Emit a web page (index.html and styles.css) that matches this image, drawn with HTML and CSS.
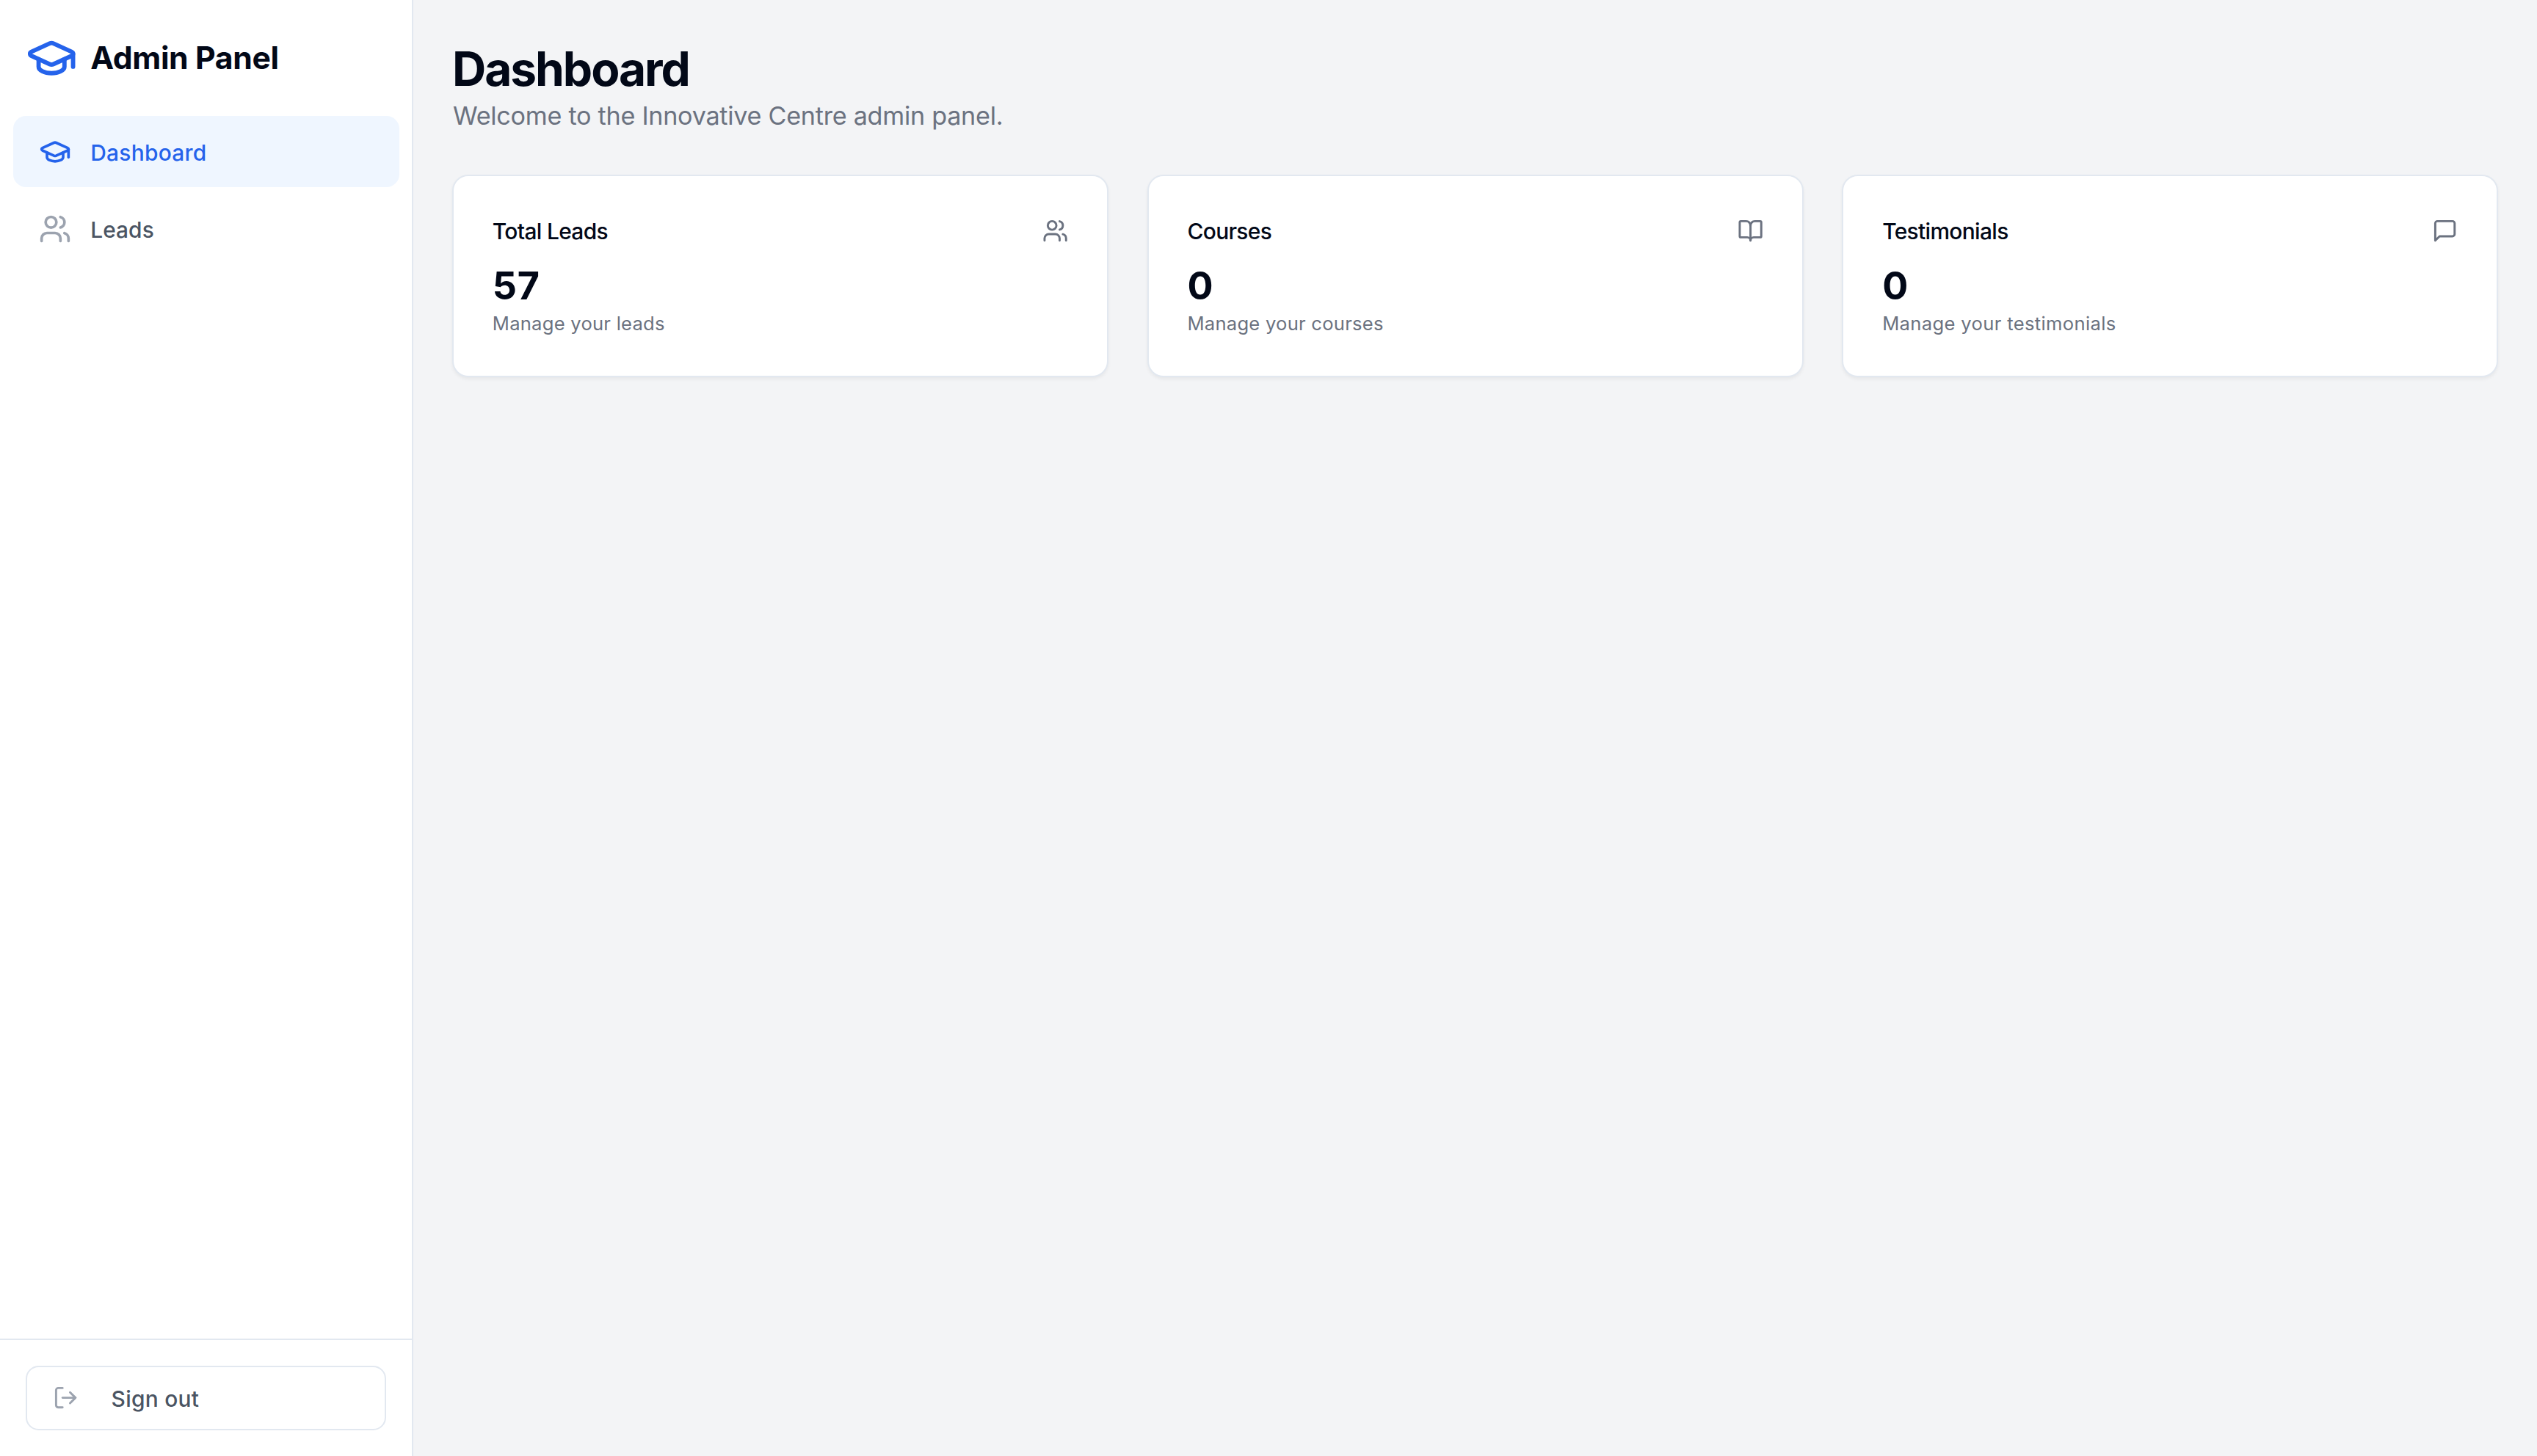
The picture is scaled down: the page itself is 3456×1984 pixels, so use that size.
FILE: index.html
```html
<!DOCTYPE html>
<html lang="en">
<head>
<meta charset="utf-8">
<title>Admin Panel</title>
<link rel="stylesheet" href="styles.css">
</head>
<body>
<svg class="sprite" aria-hidden="true">
  <symbol id="graduation-cap" viewBox="0 0 24 24">
    <path d="M21.42 10.922a1 1 0 0 0-.019-1.838L12.83 5.18a2 2 0 0 0-1.66 0L2.6 9.08a1 1 0 0 0 0 1.832l8.57 3.908a2 2 0 0 0 1.66 0z"/>
    <path d="M22 10v6"/>
    <path d="M6 12.5V16a6 3 0 0 0 12 0v-3.5"/>
  </symbol>
  <symbol id="users" viewBox="0 0 24 24">
    <path d="M16 21v-2a4 4 0 0 0-4-4H6a4 4 0 0 0-4 4v2"/>
    <circle cx="9" cy="7" r="4"/>
    <path d="M22 21v-2a4 4 0 0 0-3-3.87"/>
    <path d="M16 3.13a4 4 0 0 1 0 7.75"/>
  </symbol>
  <symbol id="book-open" viewBox="0 0 24 24">
    <path d="M12 7v14"/>
    <path d="M3 18a1 1 0 0 1-1-1V4a1 1 0 0 1 1-1h5a4 4 0 0 1 4 4 4 4 0 0 1 4-4h5a1 1 0 0 1 1 1v13a1 1 0 0 1-1 1h-6a3 3 0 0 0-3 3 3 3 0 0 0-3-3z"/>
  </symbol>
  <symbol id="message-square" viewBox="0 0 24 24">
    <path d="M21 15a2 2 0 0 1-2 2H7l-4 4V5a2 2 0 0 1 2-2h14a2 2 0 0 1 2 2z"/>
  </symbol>
  <symbol id="log-out" viewBox="0 0 24 24">
    <path d="M9 21H5a2 2 0 0 1-2-2V5a2 2 0 0 1 2-2h4"/>
    <path d="m16 17 5-5-5-5"/>
    <path d="M21 12H9"/>
  </symbol>
</svg>
<div class="layout">
  <aside class="sidebar">
    <div class="brand">
      <svg class="icon icon-lg"><use href="#graduation-cap"/></svg>
      <span class="brand-name">Admin Panel</span>
    </div>
    <nav class="nav">
      <a class="nav-item active">
        <svg class="icon icon-md"><use href="#graduation-cap"/></svg>
        <span class="label label-dashboard">Dashboard</span>
      </a>
      <a class="nav-item">
        <svg class="icon icon-md"><use href="#users"/></svg>
        <span class="label">Leads</span>
      </a>
    </nav>
    <div class="sidebar-footer">
      <button class="sign-out" type="button">
        <svg class="icon icon-sm"><use href="#log-out"/></svg>
        <span class="label label-sign-out">Sign out</span>
      </button>
    </div>
  </aside>
  <main class="main">
    <header class="page-header">
      <h1>Dashboard</h1>
      <p>Welcome to the Innovative Centre admin panel.</p>
    </header>
    <section class="cards">
      <article class="card">
        <div class="card-header">
          <h2>Total Leads</h2>
          <svg class="icon icon-sm"><use href="#users"/></svg>
        </div>
        <div class="count">57</div>
        <p class="hint">Manage your leads</p>
      </article>
      <article class="card">
        <div class="card-header">
          <h2>Courses</h2>
          <svg class="icon icon-sm"><use href="#book-open"/></svg>
        </div>
        <div class="count">0</div>
        <p class="hint">Manage your courses</p>
      </article>
      <article class="card">
        <div class="card-header">
          <h2>Testimonials</h2>
          <svg class="icon icon-sm"><use href="#message-square"/></svg>
        </div>
        <div class="count">0</div>
        <p class="hint hint-wide">Manage your testimonials</p>
      </article>
    </section>
  </main>
</div>
</body>
</html>
```
FILE: styles.css
```css
:root {
  --u: 2.2px;
  --ink: #020817;
  --line: #e2e8f0;
  --blue: #2563eb;
  --muted: #6b7280;
}

* { box-sizing: border-box; }

body {
  margin: 0;
  font-family: Inter, "Liberation Sans", sans-serif;
  color: var(--ink);
  background: #f3f4f6;
}

h1, h2, p { margin: 0; }

.sprite { display: none; }

.icon {
  flex: none;
  fill: none;
  stroke: currentColor;
  stroke-width: 2;
  stroke-linecap: round;
  stroke-linejoin: round;
}
.icon-lg { width: 70.4px; height: 70.4px; color: var(--blue); }
.icon-md { width: 44px; height: 44px; }
.icon-sm { width: 35.2px; height: 35.2px; }

.layout {
  display: grid;
  grid-template-columns: 563.2px 1fr;
  height: 100vh;
}

/* Sidebar */
.sidebar {
  display: flex;
  flex-direction: column;
  background: #fff;
  border-right: 2px solid var(--line);
}

.brand {
  display: flex;
  align-items: center;
  gap: calc(8 * var(--u));
  padding: calc(20 * var(--u)) calc(16 * var(--u)) 0;
}
.brand-name {
  font-size: 42.7px;
  font-weight: 700;
  line-height: 61.6px;
  letter-spacing: -0.35px;
}

.nav {
  flex: 1;
  display: flex;
  flex-direction: column;
  gap: calc(4 * var(--u));
  padding: calc(20 * var(--u)) calc(8 * var(--u)) 0;
}
.nav-item {
  display: flex;
  align-items: center;
  gap: calc(12 * var(--u));
  height: calc(44 * var(--u));
  padding: 0 calc(16 * var(--u));
  border-radius: calc(8 * var(--u));
  color: #9ca3af;
}
.nav-item.active { background: #eff6ff; color: var(--blue); }

.label {
  padding-top: 2px;
  font-size: 29.9px;
  font-weight: 500;
  line-height: 44px;
  letter-spacing: 0.07px;
  color: #4b5563;
}
.active .label { color: var(--blue); }
.label-dashboard { letter-spacing: 0.28px; }
.label-sign-out { letter-spacing: 0.26px; }

.sidebar-footer {
  padding: calc(16 * var(--u));
  border-top: 2px solid var(--line);
}
.sign-out {
  display: flex;
  align-items: center;
  gap: calc(20 * var(--u));
  width: 100%;
  height: calc(40 * var(--u));
  padding: 0 calc(16 * var(--u));
  font-family: inherit;
  color: #9ca3af;
  background: #fff;
  border: 2px solid var(--line);
  border-radius: calc(8 * var(--u));
}

/* Main column */
.main {
  display: flex;
  flex-direction: column;
  gap: calc(24 * var(--u));
  padding: calc(24 * var(--u));
}

.page-header h1 {
  padding-top: 3px;
  font-size: 64px;
  font-weight: 700;
  line-height: 76.2px;
  letter-spacing: -2.05px;
}
.page-header p {
  padding-left: 1px;
  font-size: 34.2px;
  line-height: 52.8px;
  letter-spacing: -0.28px;
  color: var(--muted);
}

.cards {
  display: grid;
  grid-template-columns: repeat(3, 1fr);
  gap: calc(24 * var(--u));
}
.card {
  padding: calc(24 * var(--u));
  background: #fff;
  border: 2px solid var(--line);
  border-radius: calc(10 * var(--u));
  box-shadow: 0 2.2px 4.4px rgba(0, 0, 0, 0.05);
}
.card-header {
  display: flex;
  align-items: center;
  justify-content: space-between;
  padding-bottom: calc(8 * var(--u));
  color: var(--muted);
}
.card-header h2 {
  padding-top: 2px;
  font-size: 29.9px;
  font-weight: 500;
  line-height: 42px;
  letter-spacing: -0.65px;
  color: var(--ink);
}
.count {
  padding-top: 2px;
  font-size: 52px;
  font-weight: 700;
  line-height: 68.4px;
  letter-spacing: 0.7px;
}
.hint {
  padding-bottom: 1px;
  font-size: 25.6px;
  line-height: 34.2px;
  letter-spacing: 0.24px;
  color: var(--muted);
}
.hint-wide { letter-spacing: 0.34px; }
```
